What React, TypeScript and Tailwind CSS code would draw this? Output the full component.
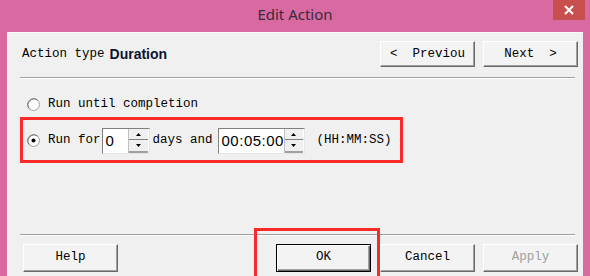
import React from "react";

const mono = { fontFamily: '"Liberation Mono", "DejaVu Sans Mono", monospace' };

function Radio({ checked }: { checked?: boolean }) {
  return (
    <svg width="13" height="13" viewBox="0 0 13 13" className="shrink-0">
      <circle cx="6.5" cy="6.5" r="6" fill="#ffffff" stroke="#a0a0a0" />
      <path d="M2.3 10.7 A6 6 0 0 1 10.7 2.3" fill="none" stroke="#6d6d6d" strokeWidth="1" />
      {checked && <circle cx="6.5" cy="6.5" r="2" fill="#000" />}
    </svg>
  );
}

function Arrow({ up }: { up?: boolean }) {
  return (
    <svg width="5" height="3" viewBox="0 0 5 3">
      <path d={up ? "M2.5 0 L5 3 L0 3 Z" : "M0 0 L5 0 L2.5 3 Z"} fill="#000" />
    </svg>
  );
}

function Spinner({ value, width }: { value: string; width: string }) {
  return (
    <div
      className={`flex h-[26px] ${width} border border-t-[#808080] border-l-[#808080] border-r-[#e6e6e6] border-b-[#e6e6e6] bg-white`}
    >
      <span
        className="flex flex-1 items-center pl-[3px] text-[15px] tracking-[0.5px] text-black"
        style={{ fontFamily: '"Liberation Sans", Arial, sans-serif' }}
      >
        {value}
      </span>
      <div className="mr-[1px] flex w-[20px] flex-col border-l border-l-[#c0c0c0] bg-[#f0f0f0]">
        <div className="flex flex-1 items-center justify-center border-b border-b-[#808080]">
          <Arrow up />
        </div>
        <div className="flex flex-1 items-center justify-center border-b-2 border-b-[#a0a0a0]">
          <Arrow />
        </div>
      </div>
    </div>
  );
}

function Btn({
  children,
  disabled,
  isDefault,
  h = "h-[26px]",
}: {
  children: React.ReactNode;
  disabled?: boolean;
  isDefault?: boolean;
  h?: string;
}) {
  const face = isDefault
    ? "border border-black shadow-[inset_1px_1px_0_#ffffff,inset_-1px_-1px_0_#696969,inset_-2px_-2px_0_#a0a0a0]"
    : "border border-t-white border-l-white border-r-[#696969] border-b-[#696969] shadow-[inset_-1px_-1px_0_#a0a0a0]";
  return (
    <div
      className={`flex ${h} w-[95px] items-center justify-center bg-[#f3f3f3] text-[12.5px] ${face} ${
        disabled ? "text-[#a0a0a0]" : "text-black"
      }`}
      style={mono}
    >
      {children}
    </div>
  );
}

function Groove({ className = "" }: { className?: string }) {
  return (
    <div className={`ml-[12px] mr-[8px] border-t border-t-[#a0a0a0] border-b border-b-white ${className}`} />
  );
}

export default function App() {
  return (
    <div className="flex h-[276px] w-[590px] flex-col overflow-hidden bg-[#d86aa1]">
      <div className="relative flex h-[32px] shrink-0 items-center justify-center pb-[3px]">
        <span
          className="text-[15px] text-[#3a2a3c]"
          style={{ fontFamily: '"Noto Sans", "Open Sans", sans-serif' }}
        >
          Edit Action
        </span>
        <div className="absolute right-[5px] top-0 flex h-[20px] w-[32px] items-center justify-center bg-[#c7504f]">
          <svg width="10" height="10" viewBox="0 0 10 10">
            <path d="M1 1 L9 9 M9 1 L1 9" stroke="#fff" strokeWidth="2" />
          </svg>
        </div>
      </div>

      <div className="relative mx-[7px] flex flex-1 flex-col border-l border-t border-l-[#fafafa] border-t-[#fafafa] bg-[#f0f0f0]">
        <div className="flex items-center pl-[14px] pr-[5px] pt-[8px]">
          <span className="text-[12.5px] text-black" style={mono}>
            Action type
          </span>
          <span
            className="ml-[5px] text-[14px] font-bold text-[#0c1430]"
            style={{ fontFamily: '"Liberation Sans", Arial, sans-serif' }}
          >
            Duration
          </span>
          <div className="ml-auto flex gap-[8px]">
            <Btn>
              <span className="whitespace-pre">{"<  Previou"}</span>
            </Btn>
            <Btn>
              <span className="whitespace-pre">{"Next  >"}</span>
            </Btn>
          </div>
        </div>

        <Groove className="mt-[10px]" />

        <div className="mt-[16px] flex items-center gap-[8px] pl-[19px] text-[12.5px] text-black" style={mono}>
          <Radio />
          <span>Run until completion</span>
        </div>

        <div
          className="ml-[12px] mt-[3px] flex h-[46px] w-[383px] items-center border-[3px] border-[#fa2a2a] pl-[4px] pt-[2px] text-[12.5px] text-black"
          style={mono}
        >
          <Radio checked />
          <span className="ml-[8px]">Run for</span>
          <div className="ml-[1px]">
            <Spinner value="0" width="w-[48px]" />
          </div>
          <span className="ml-[3px]">days and</span>
          <div className="ml-[5px]">
            <Spinner value="00:05:00" width="w-[87px]" />
          </div>
          <span className="ml-[12px]">(HH:MM:SS)</span>
        </div>

        <Groove className="mt-[71px]" />

        <div className="mt-[8px] flex pl-[15px] pr-[5px]">
          <Btn h="h-[28px]">Help</Btn>
          <div className="ml-auto flex gap-[8px]">
            <div className="mr-[1px]">
              <Btn h="h-[28px]" isDefault>
                OK
              </Btn>
            </div>
            <Btn h="h-[28px]">Cancel</Btn>
            <Btn h="h-[28px]" disabled>
              Apply
            </Btn>
          </div>
        </div>

        <div className="pointer-events-none absolute left-[246px] top-[195px] h-[60px] w-[126px] border-[3px] border-[#fa2a2a]" />
      </div>
    </div>
  );
}
